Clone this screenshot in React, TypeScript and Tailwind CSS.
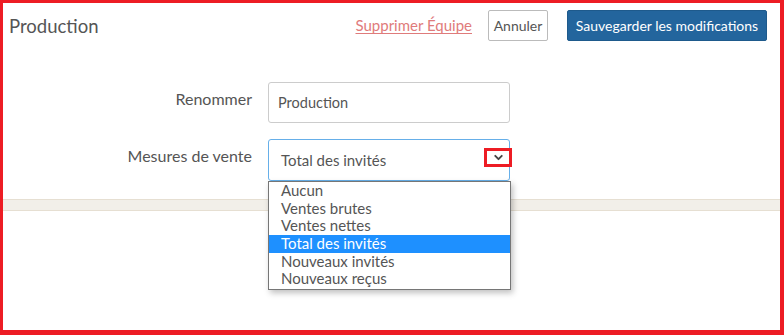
import { ChevronDown } from "lucide-react";

const options = [
  "Aucun",
  "Ventes brutes",
  "Ventes nettes",
  "Total des invités",
  "Nouveaux invités",
  "Nouveaux reçus",
];

const App = () => {
  return (
    <div
      className="relative w-[784px] h-[335px] bg-white border-solid border-[#ed1c24] border-t-[3px] border-l-[3px] border-r-4 border-b-[5px] overflow-hidden"
      style={{ fontFamily: "Lato, 'Open Sans', sans-serif" }}
    >
      {/* en-tête */}
      <div className="flex items-center justify-between pl-[6px] pr-[13px] pt-[7px]">
        <h1 className="text-[18.5px] text-[#555] leading-[30px] pt-px">Production</h1>
        <div className="flex items-center">
          <a
            href="#"
            className="text-[15px] text-[#df7b7b] underline underline-offset-2 mr-4"
          >
            Supprimer Équipe
          </a>
          <button className="h-[31px] w-[60px] border border-[#bbb] rounded-[2px] text-[14px] text-[#555] bg-white">
            Annuler
          </button>
          <button className="h-[31px] w-[200px] ml-[19px] bg-[#23659d] border border-[#1e5a8c] rounded-[2px] text-[14px] text-white">
            Sauvegarder les modifications
          </button>
        </div>
      </div>

      {/* formulaire */}
      <div className="mt-[41px] flex flex-col gap-4">
        <div className="flex">
          <label className="w-[249px] text-right text-[16px] text-[#555] leading-5 pt-[7px]">
            Renommer
          </label>
          <div className="ml-4 w-[242px] h-[41px] border border-[#ccc] rounded-[3px] flex items-center px-[9px] text-[14.5px] text-[#555]">
            Production
          </div>
        </div>
        <div className="flex">
          <label className="w-[249px] text-right text-[16px] text-[#555] leading-5 pt-[7px]">
            Mesures de vente
          </label>
          <div className="relative ml-4 w-[242px] h-[42px] border border-[#66afe9] rounded-[3px] flex items-center px-[12px] text-[15px] text-[#555]">
            Total des invités
            <div className="absolute left-[215px] top-[8px] w-[28px] h-[19px] border-[3px] border-[#ed1c24] flex items-center justify-center">
              <ChevronDown className="w-[13px] h-[13px] text-[#444]" strokeWidth={3.5} />
            </div>
            {/* liste déroulante */}
            <div className="absolute left-[-1px] top-[41px] w-[243px] bg-white border border-[#767676] shadow-[2px_3px_6px_rgba(0,0,0,0.25)] z-10 pb-px">
              {options.map((o) => (
                <div
                  key={o}
                  className={`h-[17.7px] leading-[17.7px] pl-[12px] text-[15px] ${
                    o === "Total des invités"
                      ? "bg-[#1e90ff] text-white"
                      : "text-[#555]"
                  }`}
                >
                  {o}
                </div>
              ))}
            </div>
          </div>
        </div>
      </div>

      {/* bande */}
      <div className="mt-[18px] h-[12px] bg-[#f2efe9] border-t border-b border-[#e6dfd2]" />
    </div>
  );
};

export default App;
